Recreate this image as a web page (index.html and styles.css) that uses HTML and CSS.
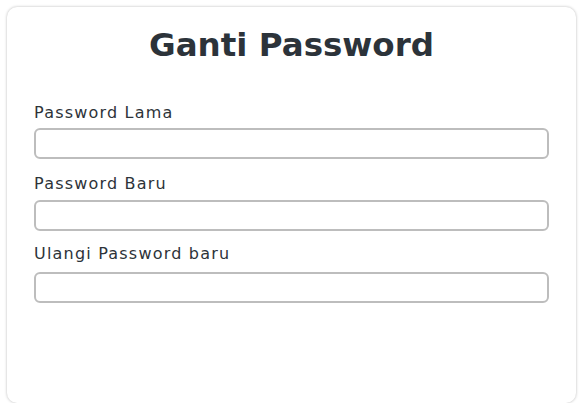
FILE: index.html
```html
<!DOCTYPE html>
<html lang="id">
<head>
<meta charset="utf-8">
<title>Ganti Password</title>
<link rel="stylesheet" href="styles.css">
</head>
<body>
<div class="card">
  <h1 class="title">Ganti Password</h1>
  <form class="form">
    <div class="field">
      <label class="label" for="old">Password Lama</label>
      <input class="input" type="password" id="old">
    </div>
    <div class="field field--second">
      <label class="label" for="new">Password Baru</label>
      <input class="input" type="password" id="new">
    </div>
    <div class="field field--third">
      <label class="label" for="rep">Ulangi Password baru</label>
      <input class="input" type="password" id="rep">
    </div>
  </form>
</div>
</body>
</html>
```
FILE: styles.css
```css
* { box-sizing: border-box; }
html, body { margin: 0; padding: 0; background: #ffffff; }
body {
  font-family: "DejaVu Sans", "Inter", sans-serif;
  color: #2d3339;
}
.card {
  margin: 7px 0 0 7px;
  width: 569px;
  height: 396px;
  background: #fff;
  border-radius: 10px;
  box-shadow: 0 0 3px rgba(0,0,0,0.28);
  padding: 18px 27px 0 27px;
}
.title {
  margin: 0;
  text-align: center;
  font-size: 32.5px;
  line-height: 40px;
  font-weight: 700;
  color: #2c333a;
}
.form {
  display: flex;
  flex-direction: column;
  gap: 16px;
  margin-top: 38px;
}
.field {
  display: flex;
  flex-direction: column;
}
.label {
  font-size: 16px;
  line-height: 20px;
  letter-spacing: 1.2px;
  color: #2d3339;
  margin-bottom: 5px;
}
.field--second { margin-top: -1px; }
.field--second .label { margin-bottom: 6px; }
.field--third { margin-top: -3px; }
.field--third .label { margin-bottom: 8px; }
.input {
  display: block;
  width: 515px;
  height: 31px;
  border: 2px solid #bdbdbd;
  border-radius: 6px;
  background: #fff;
  margin: 0;
  padding: 0 8px;
  font: inherit;
}
```
